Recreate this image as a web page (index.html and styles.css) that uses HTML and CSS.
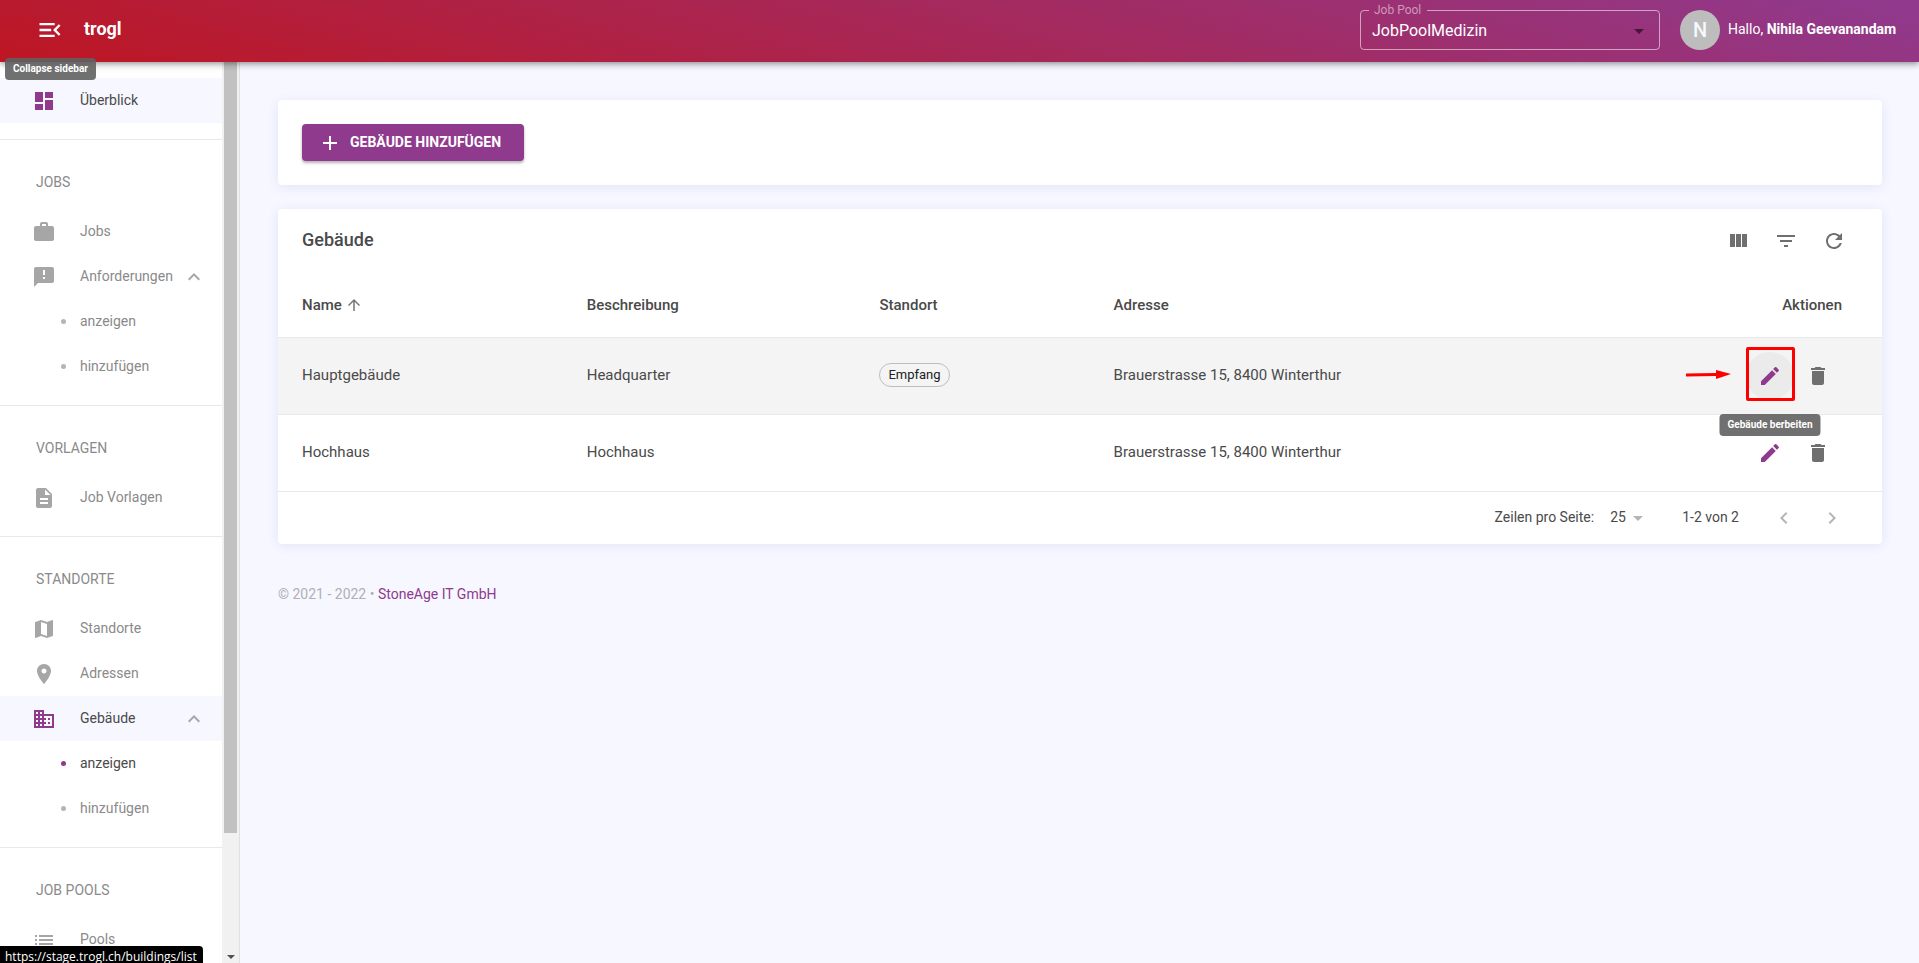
FILE: index.html
```
<!DOCTYPE html>
<html lang="de">
<head>
<meta charset="utf-8">
<title>trogl – Gebäude</title>
<link rel="stylesheet" href="styles.css">
</head>
<body>
<svg class="sprite" aria-hidden="true">
  <symbol id="i-menu" viewBox="0 0 24 24"><path d="M3 18h13v-2H3v2zm0-5h10v-2H3v2zm0-7v2h13V6H3zm18 9.590L17.420 12 21 8.410 19.590 7l-5 5 5 5L21 15.590z"/></symbol>
  <symbol id="i-dash" viewBox="0 0 24 24"><path d="M3 13h8V3H3v10zm0 8h8v-6H3v6zm10 0h8V11h-8v10zm0-18v6h8V3h-8z"/></symbol>
  <symbol id="i-work" viewBox="0 0 24 24"><path d="M20 6h-4V4c0-1.110-.89-2-2-2h-4c-1.110 0-2 .89-2 2v2H4c-1.110 0-1.990.89-1.990 2L2 19c0 1.110.89 2 2 2h16c1.110 0 2-.89 2-2V8c0-1.110-.89-2-2-2zm-6 0h-4V4h4v2z"/></symbol>
  <symbol id="i-request" viewBox="0 0 24 24"><path d="M20 2H4c-1.100 0-1.990.9-1.990 2L2 22l4-4h14c1.100 0 2-.9 2-2V4c0-1.100-.9-2-2-2zm-7 12h-2v-2h2v2zm0-4h-2V5h2v5z"/></symbol>
  <symbol id="i-doc" viewBox="0 0 24 24"><path d="M14 2H6c-1.100 0-1.990.9-1.990 2L4 20c0 1.100.89 2 1.990 2H18c1.100 0 2-.9 2-2V8l-6-6zm2 16H8v-2h8v2zm0-4H8v-2h8v2zm-3-5V3.500L18.500 9H13z"/></symbol>
  <symbol id="i-map" viewBox="0 0 24 24"><path d="M20.500 3l-.16.03L15 5.100 9 3 3.360 4.900c-.21.07-.36.25-.36.48V20.500c0 .28.22.5.5.5l.16-.03L9 18.900l6 2.100 5.640-1.900c.21-.07.36-.25.36-.48V3.500c0-.28-.22-.5-.5-.5zM15 19l-6-2.110V5l6 2.110V19z"/></symbol>
  <symbol id="i-pin" viewBox="0 0 24 24"><path d="M12 2C8.130 2 5 5.130 5 9c0 5.250 7 13 7 13s7-7.750 7-13c0-3.870-3.130-7-7-7zm0 9.500c-1.380 0-2.500-1.120-2.500-2.500s1.120-2.500 2.500-2.500 2.500 1.120 2.500 2.500-1.120 2.500-2.500 2.500z"/></symbol>
  <symbol id="i-building" viewBox="0 0 24 24"><path d="M12 7V3H2v18h20V7H12zM6 19H4v-2h2v2zm0-4H4v-2h2v2zm0-4H4V9h2v2zm0-4H4V5h2v2zm4 12H8v-2h2v2zm0-4H8v-2h2v2zm0-4H8V9h2v2zm0-4H8V5h2v2zm10 12h-8v-2h2v-2h-2v-2h2v-2h-2V9h8v10zm-2-8h-2v2h2v-2zm0 4h-2v2h2v-2z"/></symbol>
  <symbol id="i-list" viewBox="0 0 24 24"><path d="M3 13h2v-2H3v2zm0 4h2v-2H3v2zm0-8h2V7H3v2zm4 4h14v-2H7v2zm0 4h14v-2H7v2zM7 7v2h14V7H7z"/></symbol>
  <symbol id="i-up" viewBox="0 0 24 24"><path d="M12 8l-6 6 1.410 1.410L12 10.830l4.590 4.580L18 14z"/></symbol>
  <symbol id="i-plus" viewBox="0 0 24 24"><path d="M19 13h-6v6h-2v-6H5v-2h6V5h2v6h6v2z"/></symbol>
  <symbol id="i-columns" viewBox="0 0 24 24"><path d="M10 18h5V5h-5v13zm-6 0h5V5H4v13zM16 5v13h5V5h-5z"/></symbol>
  <symbol id="i-filter" viewBox="0 0 24 24"><path d="M10 18h4v-2h-4v2zM3 6v2h18V6H3zm3 7h12v-2H6v2z"/></symbol>
  <symbol id="i-refresh" viewBox="0 0 24 24"><path d="M17.650 6.350C16.200 4.900 14.210 4 12 4c-4.420 0-7.990 3.580-7.990 8s3.570 8 7.990 8c3.730 0 6.840-2.550 7.730-6h-2.080c-.82 2.330-3.040 4-5.650 4-3.310 0-6-2.690-6-6s2.690-6 6-6c1.660 0 3.140.69 4.220 1.780L13 11h7V4l-2.350 2.350z"/></symbol>
  <symbol id="i-arrow-up" viewBox="0 0 24 24"><path d="M4 12l1.410 1.410L11 7.830V20h2V7.830l5.580 5.590L20 12l-8-8-8 8z"/></symbol>
  <symbol id="i-edit" viewBox="0 0 24 24"><path d="M3 17.250V21h3.750L17.810 9.940l-3.750-3.750L3 17.250zM20.710 7.040c.39-.39.39-1.020 0-1.410l-2.340-2.340c-.39-.39-1.020-.39-1.410 0l-1.830 1.830 3.750 3.750 1.830-1.830z"/></symbol>
  <symbol id="i-trash" viewBox="0 0 24 24"><path d="M6 19c0 1.100.9 2 2 2h8c1.100 0 2-.9 2-2V7H6v12zM19 4h-3.500l-1-1h-5l-1 1H5v2h14V4z"/></symbol>
  <symbol id="i-drop" viewBox="0 0 24 24"><path d="M7 10l5 5 5-5z"/></symbol>
  <symbol id="i-left" viewBox="0 0 24 24"><path d="M15.410 7.410L14 6l-6 6 6 6 1.410-1.410L10.830 12z"/></symbol>
  <symbol id="i-right" viewBox="0 0 24 24"><path d="M10 6L8.590 7.410 13.170 12l-4.580 4.590L10 18l6-6z"/></symbol>
</svg>

<header class="topbar">
  <button class="menu-btn" type="button" aria-label="Collapse sidebar"><svg><use href="#i-menu"/></svg></button>
  <span class="brand">trogl</span>
  <fieldset class="pool">
    <legend><label for="pool">Job Pool</label></legend>
    <div class="pool-field">
      <select id="pool"><option>JobPoolMedizin</option></select>
      <svg class="icon"><use href="#i-drop"/></svg>
    </div>
  </fieldset>
  <span class="avatar">N</span>
  <span class="hello">Hallo, <b>Nihila Geevanandam</b></span>
  <span class="tooltip tooltip-menu">Collapse sidebar</span>
</header>

<div class="layout">
  <aside class="sidebar">
    <nav class="nav">
      <div class="group first">
        <a class="item active" href="#"><svg class="icon"><use href="#i-dash"/></svg><span>Überblick</span></a>
      </div>
      <div class="group">
        <h2>JOBS</h2>
        <a class="item" href="#"><svg class="icon"><use href="#i-work"/></svg><span>Jobs</span></a>
        <a class="item" href="#"><svg class="icon"><use href="#i-request"/></svg><span>Anforderungen</span><svg class="caret"><use href="#i-up"/></svg></a>
        <a class="item sub" href="#"><i class="dot"></i><span>anzeigen</span></a>
        <a class="item sub" href="#"><i class="dot"></i><span>hinzufügen</span></a>
      </div>
      <div class="group">
        <h2>VORLAGEN</h2>
        <a class="item" href="#"><svg class="icon"><use href="#i-doc"/></svg><span>Job Vorlagen</span></a>
      </div>
      <div class="group">
        <h2>STANDORTE</h2>
        <a class="item" href="#"><svg class="icon"><use href="#i-map"/></svg><span>Standorte</span></a>
        <a class="item" href="#"><svg class="icon"><use href="#i-pin"/></svg><span>Adressen</span></a>
        <a class="item active" href="#"><svg class="icon"><use href="#i-building"/></svg><span>Gebäude</span><svg class="caret"><use href="#i-up"/></svg></a>
        <a class="item sub current" href="#"><i class="dot"></i><span>anzeigen</span></a>
        <a class="item sub" href="#"><i class="dot"></i><span>hinzufügen</span></a>
      </div>
      <div class="group">
        <h2>JOB POOLS</h2>
        <a class="item" href="#"><svg class="icon"><use href="#i-list"/></svg><span>Pools</span></a>
      </div>
    </nav>
    <div class="scrollbar" aria-hidden="true"><div class="thumb"></div><svg class="scroll-down" viewBox="0 0 8 4"><path d="M0 0h8L4 4z"/></svg></div>
  </aside>

  <main class="main">
    <section class="card card-actions">
      <button class="add" type="button"><svg class="icon"><use href="#i-plus"/></svg><span>GEBÄUDE HINZUFÜGEN</span></button>
    </section>

    <section class="card">
      <div class="toolbar">
        <h1>Gebäude</h1>
        <button class="icon-btn" type="button" aria-label="Spalten"><svg class="icon"><use href="#i-columns"/></svg></button>
        <button class="icon-btn" type="button" aria-label="Filter"><svg class="icon"><use href="#i-filter"/></svg></button>
        <button class="icon-btn" type="button" aria-label="Aktualisieren"><svg class="icon"><use href="#i-refresh"/></svg></button>
      </div>
      <table>
        <colgroup><col class="c-name"><col class="c-desc"><col class="c-loc"><col><col class="c-act"></colgroup>
        <thead>
          <tr>
            <th><span class="sort">Name <svg><use href="#i-arrow-up"/></svg></span></th>
            <th>Beschreibung</th><th>Standort</th><th>Adresse</th><th class="right">Aktionen</th>
          </tr>
        </thead>
        <tbody>
          <tr class="hovered">
            <td>Hauptgebäude</td><td>Headquarter</td><td><span class="chip">Empfang</span></td><td>Brauerstrasse 15, 8400 Winterthur</td>
            <td>
              <div class="actions">
                <span class="edit-wrap">
                  <button class="icon-btn edit hover" type="button" aria-label="Gebäude berbeiten"><svg class="icon"><use href="#i-edit"/></svg></button>
                  <span class="marker"></span>
                  <svg class="pointer" viewBox="0 0 46 10"><path d="M1 3.500L31 3V0l15 4-15 5V6L1 6.500z"/></svg>
                  <span class="tooltip tooltip-edit">Gebäude berbeiten</span>
                </span>
                <button class="icon-btn" type="button" aria-label="Löschen"><svg class="icon"><use href="#i-trash"/></svg></button>
              </div>
            </td>
          </tr>
          <tr>
            <td>Hochhaus</td><td>Hochhaus</td><td></td><td>Brauerstrasse 15, 8400 Winterthur</td>
            <td>
              <div class="actions">
                <button class="icon-btn edit" type="button" aria-label="Bearbeiten"><svg class="icon"><use href="#i-edit"/></svg></button>
                <button class="icon-btn" type="button" aria-label="Löschen"><svg class="icon"><use href="#i-trash"/></svg></button>
              </div>
            </td>
          </tr>
        </tbody>
      </table>
      <div class="pagination">
        <label for="rows">Zeilen pro Seite:</label>
        <div class="rows-field"><select id="rows"><option>25</option></select><svg class="icon"><use href="#i-drop"/></svg></div>
        <span class="range">1-2 von 2</span>
        <button class="icon-btn dim" type="button" aria-label="Zurück"><svg class="icon"><use href="#i-left"/></svg></button>
        <button class="icon-btn dim" type="button" aria-label="Weiter"><svg class="icon"><use href="#i-right"/></svg></button>
      </div>
    </section>

    <footer class="footer">© 2021 - 2022 • <a href="#">StoneAge IT GmbH</a></footer>
  </main>
</div>
<div class="status">https://stage.trogl.ch/buildings/list</div>
</body>
</html>
```
FILE: styles.css
```
:root {
  --purple: #8f3a8d;
  --page: #f6f7ff;
  --line: #e8e8e8;
  --text: #4a4a4a;
}
* { box-sizing: border-box; }
body {
  margin: 0;
  height: 100vh;
  display: flex;
  flex-direction: column;
  overflow: hidden;
  background: var(--page);
  color: var(--text);
  font: 14px/20px Roboto, sans-serif;
}
h1, h2 { margin: 0; }
a { color: inherit; text-decoration: none; }
button { border: 0; padding: 0; background: none; color: inherit; font: inherit; }
select { appearance: none; border: 0; margin: 0; padding: 0; background: none; color: inherit; font: inherit; }
svg { fill: currentColor; flex: none; }
.sprite { position: absolute; width: 0; height: 0; }
.icon { width: 24px; height: 24px; }

.topbar {
  position: relative;
  z-index: 2;
  flex: none;
  display: flex;
  align-items: center;
  height: 62px;
  padding: 0 18px 2px 36px;
  background: linear-gradient(15deg, #be1622, #8f3a8f);
  color: #fff;
  box-shadow: 0 2px 4px -1px rgba(0,0,0,.2), 0 4px 5px rgba(0,0,0,.14), 0 1px 10px rgba(0,0,0,.12);
}
.menu-btn { display: flex; margin-right: 20px; }
.menu-btn svg { width: 28px; height: 28px; }
.brand { font-size: 18px; font-weight: 700; margin-right: auto; padding-bottom: 2px; }
.pool {
  width: 300px;
  margin: 3px 20px 0 0;
  padding: 0 8px 5px;
  border: 1px solid rgba(255,255,255,.55);
  border-radius: 4px;
  align-self: flex-start;
}
.pool legend { padding: 0 6px 0 5px; font-size: 12px; line-height: 14px; color: rgba(255,255,255,.5); }
.pool-field { display: grid; align-items: center; padding-left: 3px; }
.pool-field > * { grid-area: 1 / 1; }
.pool-field select { font-size: 16px; line-height: 27px; }
.pool-field .icon { justify-self: end; color: rgba(0,0,0,.54); pointer-events: none; }
.avatar {
  display: grid;
  place-items: center;
  width: 40px;
  height: 40px;
  margin-right: 8px;
  border-radius: 50%;
  background: #bdbdbd;
  color: var(--page);
  font-size: 20px;
  font-weight: 500;
}
.hello { min-width: 173px; padding-bottom: 2px; }
.tooltip {
  position: absolute;
  padding: 4px 8px;
  border-radius: 4px;
  background: rgba(97,97,97,.9);
  color: #fff;
  font-size: 10px;
  font-weight: 700;
  line-height: 14px;
  white-space: nowrap;
}
.tooltip-menu { left: 5px; top: 58px; }
.tooltip-edit { left: 50%; top: 62px; transform: translateX(-50%); z-index: 1; }

.layout { flex: 1; display: flex; min-height: 0; }
.sidebar { flex: none; display: flex; width: 240px; background: #fff; border-right: 1px solid #e0e0e0; }
.nav { flex: 1; overflow: hidden; }
.group { padding-bottom: 16px; border-bottom: 1px solid var(--line); }
.group.first { padding-top: 16px; }
.group h2 { padding: 32px 36px 17px; font-size: 14px; line-height: 20px; font-weight: 400; color: #8a8a8a; }
.item { display: flex; align-items: center; height: 45px; padding: 0 16px 0 32px; color: #8a8a8a; }
.item span { padding-bottom: 2px; }
.item .icon { margin-right: 24px; color: #a6a6a6; }
.item.active { background: var(--page); color: var(--text); }
.item.active .icon { color: var(--purple); }
.caret { width: 24px; height: 24px; margin-left: auto; color: #a6a6a6; }
.dot { width: 5px; height: 5px; margin: 0 14px 0 29px; border-radius: 50%; background: #b5b5b5; }
.item.current { color: var(--text); }
.current .dot { background: var(--purple); }
.scrollbar { display: flex; flex-direction: column; align-items: center; justify-content: space-between; width: 17px; background: #f1f1f1; padding-bottom: 4px; }
.thumb { width: 13px; height: 86%; background: #c1c1c1; }
.scroll-down { width: 8px; height: 4px; color: #505050; }

.main { flex: 1; min-width: 0; padding: 38px 37px 0 38px; }
.card { background: #fff; border-radius: 4px; box-shadow: 0 2px 12px rgba(80,80,200,.11); margin-bottom: 24px; }
.card-actions { padding: 24px; }
.add {
  display: flex;
  align-items: center;
  min-width: 222px;
  height: 37px;
  padding: 0 16px;
  border-radius: 4px;
  background: var(--purple);
  color: #fff;
  font-weight: 700;
  box-shadow: 0 2px 3px rgba(0,0,0,.3);
}
.add .icon { margin-right: 8px; }
.add span { padding-bottom: 2px; }
.toolbar { display: flex; align-items: center; height: 64px; padding: 0 24px; }
.toolbar h1 { margin-right: auto; padding-bottom: 2px; font-size: 18px; font-weight: 500; }
.icon-btn { display: grid; place-items: center; width: 48px; height: 48px; border-radius: 50%; color: #6f6f6f; }
table { width: 100%; border-collapse: collapse; table-layout: fixed; }
.c-name, .c-desc { width: 18.250%; }
.c-loc { width: 14.600%; }
.c-act { width: 200px; }
th, td { padding: 0 16px; border-bottom: 1px solid var(--line); text-align: left; font-size: 15px; }
th { height: 64px; font-weight: 500; }
td { height: 77px; padding-bottom: 2px; }
th:first-child, td:first-child { padding-left: 24px; }
th:last-child, td:last-child { padding-right: 40px; }
td:last-child { padding-bottom: 0; }
th.right { text-align: right; }
.sort { display: flex; align-items: center; gap: 3px; }
.sort svg { width: 18px; height: 18px; color: #757575; }
.hovered { background: #f4f4f4; }
.chip { display: inline-block; padding: 0 8px; border: 1px solid #bdbdbd; border-radius: 12px; color: #212121; font-size: 13px; line-height: 22px; }
.actions { display: flex; justify-content: flex-end; }
.edit { color: var(--purple); }
.edit.hover { background: #ebebeb; }
.edit-wrap { position: relative; }
.marker { position: absolute; inset: -5px -1px -1px 0; border: 3px solid #f00; border-radius: 2px; pointer-events: none; }
.pointer { position: absolute; right: 63px; top: 18px; width: 46px; height: 10px; color: #f00; }
.pagination { display: flex; align-items: center; justify-content: flex-end; height: 52px; padding-right: 26px; }
.pagination label, .pagination select, .range { padding-bottom: 2px; }
.rows-field { display: flex; align-items: center; margin: 0 32px 0 16px; }
.rows-field .icon { color: #b5b5b5; }
.range { margin-right: 21px; }
.dim { color: #b5b5b5; }
.footer { padding-top: 16px; color: #b0b0b5; }
.footer a { color: var(--purple); }
.status {
  position: absolute;
  left: 0;
  bottom: -5px;
  z-index: 3;
  padding: 0 6px 0 5px;
  border-radius: 0 4px 0 0;
  background: #000;
  color: #fff;
  font: 12px/22px "Open Sans", "Noto Sans", sans-serif;
}
```
